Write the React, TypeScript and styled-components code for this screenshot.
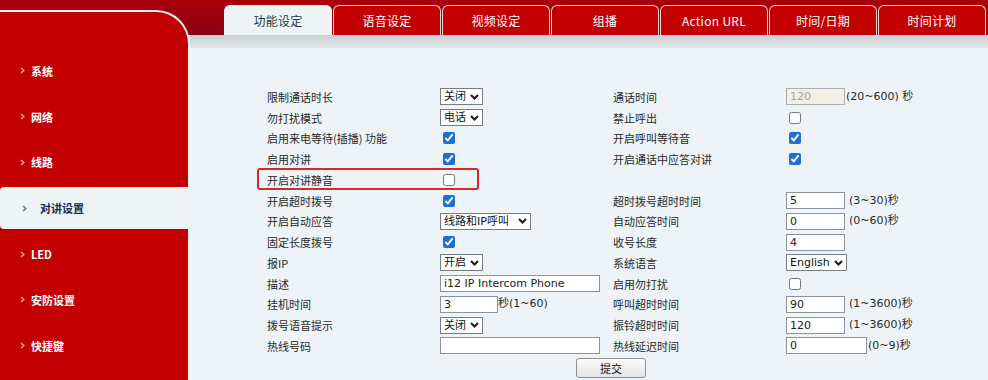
import styled, { createGlobalStyle, css } from 'styled-components';

const GlobalStyle = createGlobalStyle`
  html, body {
    margin: 0;
    padding: 0;
  }
  body {
    width: 988px;
    height: 380px;
    overflow: hidden;
  }
`;

const CN = `"Noto Sans CJK SC", sans-serif`;
const FORM_FONT = `"DejaVu Sans", "Noto Sans CJK SC", sans-serif`;

const Page = styled.div`
  display: flex;
  width: 988px;
  height: 380px;
  background: linear-gradient(#ab000c 0, #8a0012 35px, #edf3f6 35px);
  font-family: ${CN};
`;

const Sidebar = styled.nav`
  box-sizing: border-box;
  width: 190px;
  height: 370px;
  margin-top: 10px;
  padding-top: 36px;
  background: #c30000;
  border-top: 2px solid #f4f0f0;
  border-right: 2px solid #f4f0f0;
  border-top-right-radius: 34px;
  display: flex;
  flex-direction: column;
`;

const NavItem = styled.div<{ $active?: boolean }>`
  display: flex;
  align-items: center;
  height: 45.8px;
  padding-left: 20px;
  gap: 6px;
  color: #fff;
  font-size: 11px;
  font-weight: 700;
  ${(p) =>
    p.$active &&
    css`
      height: 41.8px;
      margin: 2px 0;
      padding-left: 22px;
      gap: 13px;
      color: #13304a;
      background: #eef3f6;
      border-radius: 4px 0 0 4px;
    `}
`;

const Main = styled.div`
  flex: 1;
  display: flex;
  flex-direction: column;
`;

const TabBar = styled.div`
  box-sizing: border-box;
  height: 35px;
  padding: 5px 0 0 34px;
  display: flex;
  gap: 1px;
`;

const Tab = styled.div<{ $active?: boolean }>`
  box-sizing: border-box;
  width: 108px;
  height: 30px;
  display: flex;
  align-items: center;
  justify-content: center;
  font-size: 12px;
  letter-spacing: 0.3px;
  border-radius: 6px 6px 0 0;
  border: 1px solid #f2d4d4;
  border-bottom: none;
  background: #c30000;
  color: #fff;
  ${(p) =>
    p.$active &&
    css`
      background: #eef3f6;
      border-color: #eef3f6;
      color: #1a3c4c;
    `}
`;

const ShadowBar = styled.div`
  height: 13px;
  background: linear-gradient(#c8cdd1, #e2e7ea);
`;

const Content = styled.div`
  flex: 1;
  background: #edf3f6;
  padding: 38.5px 0 0 77px;
  font-family: ${FORM_FONT};
  font-size: 11px;
  color: #2a2a2a;
`;

const Form = styled.div`
  width: 688px;
`;

const Row = styled.div<{ $mark?: boolean }>`
  display: grid;
  grid-template-columns: 173px 173px 173px 169px;
  align-items: center;
  height: 20.75px;
  position: relative;
  ${(p) =>
    p.$mark &&
    css`
      &::before {
        content: '';
        position: absolute;
        box-sizing: border-box;
        left: -10px;
        top: -2px;
        width: 222px;
        height: 22px;
        border: 2px solid #d42a2a;
        border-radius: 3px;
      }
    `}
`;

const Label = styled.span`
  font-family: ${CN};
  white-space: nowrap;
  line-height: 14px;
`;

const Cell = styled.div`
  display: flex;
  align-items: center;
  white-space: nowrap;
`;

const SelectBox = styled.div<{ $w: number }>`
  box-sizing: border-box;
  width: ${(p) => p.$w}px;
  height: 17px;
  display: flex;
  align-items: center;
  justify-content: space-between;
  padding: 0 3px 0 3px;
  background: #fff;
  border: 1px solid #767c84;
  font-family: ${FORM_FONT};
  font-size: 11px;
  line-height: 15px;
  color: #111;
`;

const TextInput = styled.div<{ $w: number; $disabled?: boolean }>`
  box-sizing: border-box;
  width: ${(p) => p.$w}px;
  height: 17px;
  padding: 0 3px;
  display: flex;
  align-items: center;
  background: ${(p) => (p.$disabled ? '#f3efe5' : '#fff')};
  border: 1px solid ${(p) => (p.$disabled ? '#a9afb5' : '#8c939a')};
  color: ${(p) => (p.$disabled ? '#a4a4a4' : '#222')};
  font-size: 11px;
  line-height: 15px;
`;

const Hint = styled.span<{ $gap?: number }>`
  margin-left: ${(p) => p.$gap ?? 4}px;
  line-height: 14px;
`;

const Check = styled.input.attrs({ type: 'checkbox' })`
  width: 12px;
  height: 12px;
  margin: 0 0 0 3px;
  accent-color: #1c71d8;
`;

const Footer = styled.div`
  display: flex;
  justify-content: center;
  padding-top: 1.5px;
`;

const SubmitButton = styled.button`
  width: 70px;
  height: 20px;
  border: 1px solid #8f8f8f;
  border-radius: 3px;
  background: linear-gradient(#fbfbfb, #e4e4e4);
  font-family: ${CN};
  font-size: 11px;
  color: #111;
  padding: 0;
`;

const Chevron = () => (
  <svg width="9" height="6" viewBox="0 0 9 6">
    <path d="M1 1 L4.5 4.5 L8 1" fill="none" stroke="#222" strokeWidth="2.2" />
  </svg>
);

const NavArrow = ({ active }: { active?: boolean }) => (
  <svg width="5" height="7" viewBox="0 0 5 7">
    <path
      d="M1 1 L3.8 3.5 L1 6"
      fill="none"
      stroke={active ? '#6a7580' : '#f3a3a3'}
      strokeWidth="1.5"
    />
  </svg>
);

const Select = ({ value, w }: { value: string; w: number }) => (
  <SelectBox $w={w}>
    <span>{value}</span>
    <Chevron />
  </SelectBox>
);

const navItems = ['系统', '网络', '线路', '对讲设置', 'LED', '安防设置', '快捷键'];
const tabs = ['功能设定', '语音设定', '视频设定', '组播', 'Action URL', '时间/日期', '时间计划'];

const App = () => {
  return (
    <>
      <GlobalStyle />
      <Page>
        <Sidebar>
          {navItems.map((n) => (
            <NavItem key={n} $active={n === '对讲设置'}>
              <NavArrow active={n === '对讲设置'} />
              <span>{n}</span>
            </NavItem>
          ))}
        </Sidebar>
        <Main>
          <TabBar>
            {tabs.map((t, i) => (
              <Tab key={t} $active={i === 0}>
                {t}
              </Tab>
            ))}
          </TabBar>
          <ShadowBar />
          <Content>
            <Form>
              <Row>
                <Label>限制通话时长</Label>
                <Cell><Select value="关闭" w={43} /></Cell>
                <Label>通话时间</Label>
                <Cell>
                  <TextInput $w={59} $disabled>120</TextInput>
                  <Hint $gap={1}>(20~600) 秒</Hint>
                </Cell>
              </Row>
              <Row>
                <Label>勿打扰模式</Label>
                <Cell><Select value="电话" w={43} /></Cell>
                <Label>禁止呼出</Label>
                <Cell><Check readOnly /></Cell>
              </Row>
              <Row>
                <Label>启用来电等待(插播) 功能</Label>
                <Cell><Check readOnly checked /></Cell>
                <Label>开启呼叫等待音</Label>
                <Cell><Check readOnly checked /></Cell>
              </Row>
              <Row>
                <Label>启用对讲</Label>
                <Cell><Check readOnly checked /></Cell>
                <Label>开启通话中应答对讲</Label>
                <Cell><Check readOnly checked /></Cell>
              </Row>
              <Row $mark>
                <Label>开启对讲静音</Label>
                <Cell><Check readOnly /></Cell>
              </Row>
              <Row>
                <Label>开启超时拨号</Label>
                <Cell><Check readOnly checked /></Cell>
                <Label>超时拨号超时时间</Label>
                <Cell>
                  <TextInput $w={59}>5</TextInput>
                  <Hint>(3~30)秒</Hint>
                </Cell>
              </Row>
              <Row>
                <Label>开启自动应答</Label>
                <Cell><Select value="线路和IP呼叫" w={91} /></Cell>
                <Label>自动应答时间</Label>
                <Cell>
                  <TextInput $w={59}>0</TextInput>
                  <Hint>(0~60)秒</Hint>
                </Cell>
              </Row>
              <Row>
                <Label>固定长度拨号</Label>
                <Cell><Check readOnly checked /></Cell>
                <Label>收号长度</Label>
                <Cell><TextInput $w={59}>4</TextInput></Cell>
              </Row>
              <Row>
                <Label>报IP</Label>
                <Cell><Select value="开启" w={43} /></Cell>
                <Label>系统语言</Label>
                <Cell><Select value="English" w={61} /></Cell>
              </Row>
              <Row>
                <Label>描述</Label>
                <Cell><TextInput $w={160}>i12 IP Intercom Phone</TextInput></Cell>
                <Label>启用勿打扰</Label>
                <Cell><Check readOnly /></Cell>
              </Row>
              <Row>
                <Label>挂机时间</Label>
                <Cell>
                  <TextInput $w={58}>3</TextInput>
                  <Hint $gap={0}>秒(1~60)</Hint>
                </Cell>
                <Label>呼叫超时时间</Label>
                <Cell>
                  <TextInput $w={59}>90</TextInput>
                  <Hint>(1~3600)秒</Hint>
                </Cell>
              </Row>
              <Row>
                <Label>拨号语音提示</Label>
                <Cell><Select value="关闭" w={43} /></Cell>
                <Label>振铃超时时间</Label>
                <Cell>
                  <TextInput $w={59}>120</TextInput>
                  <Hint>(1~3600)秒</Hint>
                </Cell>
              </Row>
              <Row>
                <Label>热线号码</Label>
                <Cell><TextInput $w={160} /></Cell>
                <Label>热线延迟时间</Label>
                <Cell>
                  <TextInput $w={81}>0</TextInput>
                  <Hint $gap={1}>(0~9)秒</Hint>
                </Cell>
              </Row>
              <Footer>
                <SubmitButton>提交</SubmitButton>
              </Footer>
            </Form>
          </Content>
        </Main>
      </Page>
    </>
  );
};

export default App;
